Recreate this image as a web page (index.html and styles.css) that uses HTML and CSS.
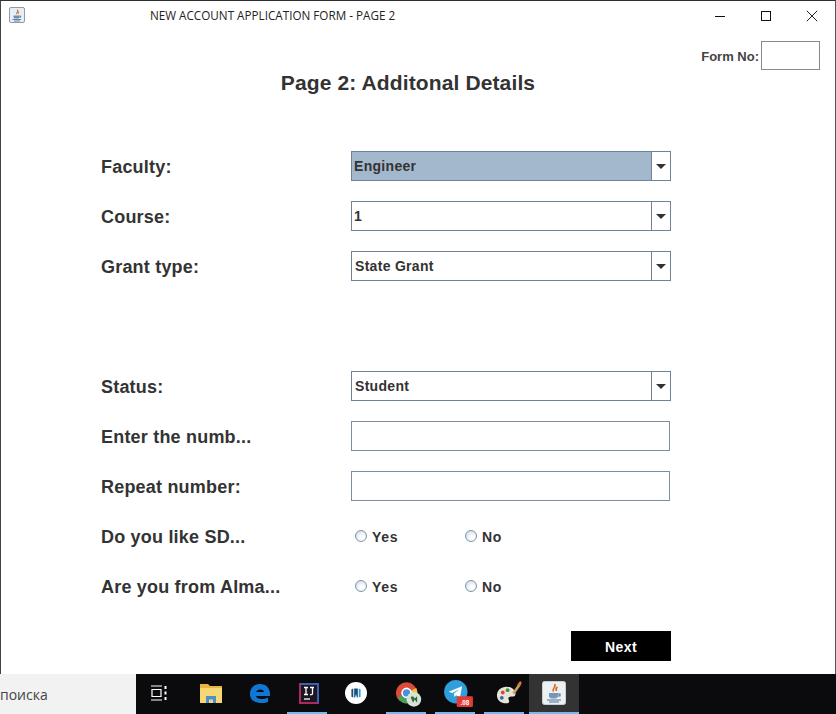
FILE: index.html
```html
<!DOCTYPE html>
<html lang="en">
<head>
<meta charset="utf-8">
<title>New Account Application Form</title>
<link rel="stylesheet" href="styles.css">
</head>
<body>
<div class="window">
  <header class="titlebar">
    <svg class="app-icon" width="16" height="16" viewBox="0 0 16 16"><rect x=".5" y=".5" width="15" height="15" rx="1.5" fill="#e9eef4" stroke="#8d9bab"/><path d="M8.500 2.500c1.500 1.600-1.800 2.700-.6 4.600M10 4.500c-.9.700-1.300 1.200-.6 2.600" fill="none" stroke="#d9772b" stroke-width="1.100"/><path d="M4.500 8.500h6v1.500c0 1-1 1.500-3 1.500s-3-.5-3-1.500z" fill="#6d8eb0"/><path d="M10.500 9h1.200v1.200h-1.200M3.500 12.500h8.500M5 14h6" fill="none" stroke="#44688d" stroke-width=".8"/></svg>
    <span class="title">NEW ACCOUNT APPLICATION FORM - PAGE 2</span>
    <div class="win-controls">
      <svg width="12" height="12" viewBox="0 0 12 12"><path d="M1 6.500h10" stroke="#111" stroke-width="1"/></svg>
      <svg width="12" height="12" viewBox="0 0 12 12"><rect x="1.500" y="1.500" width="9" height="9" fill="none" stroke="#111"/></svg>
      <svg width="12" height="12" viewBox="0 0 12 12"><path d="M.8.800l10.400 10.400M11.200.800L.8 11.200" stroke="#222" stroke-width="1"/></svg>
    </div>
  </header>
  <div class="form-no">
    <label class="form-no-label">Form No:</label>
    <div class="form-no-input"></div>
  </div>
  <h1 class="heading">Page 2: Additonal Details</h1>
  <main class="form">
    <div class="row"><span class="label">Faculty:</span>
      <div class="combo selected"><span class="combo-value">Engineer</span><span class="combo-btn"><i class="arrow"></i></span></div></div>
    <div class="row"><span class="label">Course:</span>
      <div class="combo"><span class="combo-value">1</span><span class="combo-btn"><i class="arrow"></i></span></div></div>
    <div class="row"><span class="label">Grant type:</span>
      <div class="combo"><span class="combo-value inset">State Grant</span><span class="combo-btn"><i class="arrow"></i></span></div></div>
    <div class="row row-gap"><span class="label">Status:</span>
      <div class="combo"><span class="combo-value inset">Student</span><span class="combo-btn"><i class="arrow"></i></span></div></div>
    <div class="row"><span class="label">Enter the numb...</span><div class="field"></div></div>
    <div class="row"><span class="label">Repeat number:</span><div class="field"></div></div>
    <div class="row"><span class="label">Do you like SD...</span>
      <div class="radios"><span class="radio"><i class="dot"></i>Yes</span><span class="radio"><i class="dot"></i>No</span></div></div>
    <div class="row"><span class="label">Are you from Alma...</span>
      <div class="radios"><span class="radio"><i class="dot"></i>Yes</span><span class="radio"><i class="dot"></i>No</span></div></div>
    <div class="actions"><button class="next" type="button">Next</button></div>
  </main>
</div>
<footer class="taskbar">
  <div class="search">поиска</div>
  <div class="tasks">
    <div class="task"><svg width="16" height="16" viewBox="0 0 16 16"><path d="M0 1h11M0 15h11M1 4.500h9v7H1z" fill="none" stroke="#fff" stroke-width="1.200"/><path d="M13.500 1h2v3h-2zM13.500 6.500h2v3h-2zM13.500 12h2v3h-2z" fill="#fff"/></svg></div>
    <div class="task shift-folder"><svg width="22" height="19" viewBox="0 0 22 19"><path d="M0 0h8l2 2h12v17H0z" fill="#e8b53e"/><path d="M0 4h22v15H0z" fill="#f7d774"/><path d="M6 19v-7h10v7h-3v-3.500H9V19z" fill="#4b8fcb"/></svg></div>
    <div class="task shift-edge"><svg width="20" height="19" viewBox="0 0 20 19"><path d="M0 10C0 4 4 0 10 0c6 0 10 4 10 10v2H6c.5 3.500 7 4 12 1.500v4.500c-6 2-18 1.500-18-8zm6-2h8c0-3.500-7-3.500-8 0z" fill="#0f78d4"/></svg></div>
    <div class="task active shift-ij"><svg width="20" height="21" viewBox="0 0 20 21"><rect x="1" y="1" width="18" height="19" fill="#1b1622" stroke="#a82b5c" stroke-width="2"/><path d="M1 1h18v19" fill="none" stroke="#3a5fb5" stroke-width="2"/><path d="M5 4.500h4M7 4.500v7M5 11.500h4M11 4.500h4M13.500 4.500v6c0 1-1 1.500-2.500 1" fill="none" stroke="#fff" stroke-width="1.300"/><path d="M5 16h6" stroke="#fff" stroke-width="1.300"/></svg></div>
    <div class="task"><svg width="22" height="22" viewBox="0 0 24 24"><circle cx="12" cy="12" r="12" fill="#fff"/><path d="M7 8l2-1v10l-2-1zM10 7h4v10h-1l-1-4-1 4h-1z" fill="#16507c"/><path d="M15 7l2 1v8l-2 1z" fill="#2f9fd0"/></svg></div>
    <div class="task active shift-chrome"><svg width="26" height="27" viewBox="0 0 32 32"><circle cx="13" cy="14" r="13" fill="#dd4b39"/><path d="M13 14L25 8a13 13 0 0 1-5 17z" fill="#f6c445"/><path d="M13 14l7 11A13 13 0 0 1 2 20z" fill="#3da55c"/><circle cx="13" cy="14" r="5.500" fill="#4a90e2" stroke="#fff" stroke-width="2"/><circle cx="22" cy="22" r="9" fill="#d9e2d6"/><path d="M18 19l3 7 2-4 3 4v-8l-3 3-2-3z" fill="#2e6b3e"/></svg></div>
    <div class="task active shift-telegram"><svg width="29" height="27" viewBox="0 0 32 30"><circle cx="13" cy="13" r="13" fill="#2f9fdb"/><path d="M5 13l15-6-2.500 13-4-3-2 2-.7-3.800 6.500-5.200-8 4.500z" fill="#fff"/><rect x="14" y="18" width="18" height="12" rx="1.500" fill="#e53935"/><text class="badge" x="23" y="27.500" text-anchor="middle">.08</text></svg></div>
    <div class="task active shift-palette"><svg width="27" height="27" viewBox="0 0 28 28"><path d="M11 7c-6 0-10 4-10 9 0 6 6 9 11 8 2-.5 2-2.500 1-4-.5-2 1-3 3-3 3 .5 5-1 4-4-1-4-5-6-9-6z" fill="#e8e4d8"/><circle cx="7" cy="13" r="2" fill="#d9483b"/><circle cx="12" cy="10.500" r="2" fill="#3f8f4f"/><circle cx="6" cy="18.500" r="2" fill="#2f6fb5"/><path d="M17 13L24 3l2 2-7 10z" fill="#c9a15a"/><path d="M22 5l3-4 2 2-3 3z" fill="#e0752c"/></svg></div>
    <div class="task current"><svg width="24" height="24" viewBox="0 0 24 24"><rect x=".5" y=".5" width="23" height="23" rx="2" fill="#edf0f2" stroke="#c9ced3"/><path d="M12.500 3c2.500 2.500-3 4.500-1 7.500M15.500 6c-1.500 1-2 2-1 4" fill="none" stroke="#d66a22" stroke-width="1.600"/><path d="M7 12h9v3c0 2-2 2.500-4.500 2.500S7 17 7 15z" fill="#7897b5"/><path d="M16 13h2v2h-2M5 19h14M7 21h10" fill="none" stroke="#4b7299" stroke-width="1.200"/></svg></div>
  </div>
</footer>
</body>
</html>
```
FILE: styles.css
```css
* { box-sizing: border-box; }
html, body { margin: 0; padding: 0; }
body {
  width: 836px;
  height: 714px;
  overflow: hidden;
  background: #fff;
  font-family: "Liberation Sans", Arial, sans-serif;
  color: #333;
}
.window {
  height: 674px;
  background: #fff;
  border-top: 1px solid #2f2f2f;
  border-left: 1px solid #444;
  border-right: 1px solid #555;
  display: flex;
  flex-direction: column;
}
.titlebar {
  height: 28px;
  flex: none;
  display: flex;
  align-items: center;
  padding-left: 8px;
}
.app-icon { flex: none; }
.title {
  margin-left: 125px;
  font: 11.7px "Open Sans", "Noto Sans", sans-serif;
  color: #222;
  white-space: nowrap;
}
.win-controls {
  margin-left: auto;
  margin-top: 2px;
  display: flex;
  gap: 34px;
  padding-right: 17px;
}
.win-controls svg { display: block; }
.form-no {
  height: 30px;
  flex: none;
  margin-top: 11px;
  display: flex;
  justify-content: flex-end;
  align-items: center;
  padding-right: 15px;
}
.form-no-label { font-size: 13px; font-weight: 700; color: #444; margin-right: 2px; padding-top: 2px; }
.form-no-input { width: 59px; height: 29px; border: 1px solid #8a8a8a; background: #fff; }
.heading {
  margin: -1px 0 0;
  padding-right: 20px;
  text-align: center;
  font-size: 21px;
  letter-spacing: .12px;
  line-height: 28px;
  font-weight: 700;
  color: #333;
  height: 28px;
}
.form {
  margin-top: 54px;
  padding-left: 100px;
  display: flex;
  flex-direction: column;
  gap: 20px;
}
.row {
  height: 30px;
  display: flex;
  align-items: center;
}
.row-gap { margin-top: 70px; }
.label {
  width: 250px;
  flex: none;
  font-size: 18px;
  letter-spacing: .2px;
  font-weight: 700;
  color: #333;
  white-space: nowrap;
  padding-top: 2px;
}
.combo {
  width: 320px;
  height: 30px;
  border: 1px solid #6f8296;
  background: #fff;
  display: flex;
  font-size: 14px;
  letter-spacing: .3px;
  font-weight: 700;
  color: #333;
}
.combo-value {
  flex: 1;
  display: flex;
  align-items: center;
  padding-left: 2px;
}
.combo-value.inset { padding-left: 3px; }
.selected .combo-value { background: #a3b8cc; }
.combo-btn {
  width: 19px;
  flex: none;
  border-left: 1px solid #6f8296;
  background: #fff;
  display: flex;
  align-items: center;
  justify-content: center;
}
.arrow {
  width: 0;
  height: 0;
  border-left: 5px solid transparent;
  border-right: 5px solid transparent;
  border-top: 5px solid #333;
}
.field {
  width: 319px;
  height: 30px;
  border: 1px solid #7c8ea3;
  background: #fff;
}
.radios {
  display: flex;
  padding-left: 4px;
}
.radio {
  width: 110px;
  display: flex;
  align-items: center;
  gap: 5px;
  font-size: 14px;
  letter-spacing: .7px;
  font-weight: 700;
  color: #333;
  padding-top: 2px;
}
.dot {
  width: 12px;
  height: 12px;
  border-radius: 50%;
  border: 1px solid #7f95a8;
  background: radial-gradient(circle at 60% 65%, #fff 20%, #d5deea 80%);
  margin-top: -3px;
}
.actions {
  display: flex;
  padding-left: 470px;
  margin-top: 10px;
}
.next {
  width: 100px;
  height: 30px;
  border: 0;
  background: #000;
  color: #fff;
  font: 700 14px "Liberation Sans", Arial, sans-serif;
  letter-spacing: .4px;
  padding: 2px 0 0;
}
.taskbar {
  height: 40px;
  display: flex;
  background: #0b0b0d;
}
.search {
  width: 136px;
  flex: none;
  background: #f2f2f2;
  color: #444;
  font: 14px "Open Sans", "Noto Sans", sans-serif;
  line-height: 42px;
}
.tasks { display: flex; margin-left: -2px; }
.task {
  position: relative;
  width: 49.4px;
  height: 40px;
  flex: none;
  display: flex;
  align-items: center;
  justify-content: center;
  padding-bottom: 2px;
}
.task svg { display: block; }
.shift-folder svg { margin-left: 5px; }
.shift-edge svg { margin-left: 5px; }
.shift-ij svg { margin-left: 4px; }
.shift-chrome svg { margin-left: 6px; margin-top: 3px; }
.shift-telegram svg { margin-left: 6px; }
.shift-palette svg { margin-left: 10px; }
.task.active::after {
  content: "";
  position: absolute;
  left: 4.7px;
  right: 4.7px;
  bottom: 0;
  height: 2px;
  background: #76b9ed;
}
.task.current { background: #333; box-shadow: inset 0 -2px 0 #76b9ed; }
.badge { font: 700 7px "Liberation Sans", sans-serif; fill: #fff; }
```
